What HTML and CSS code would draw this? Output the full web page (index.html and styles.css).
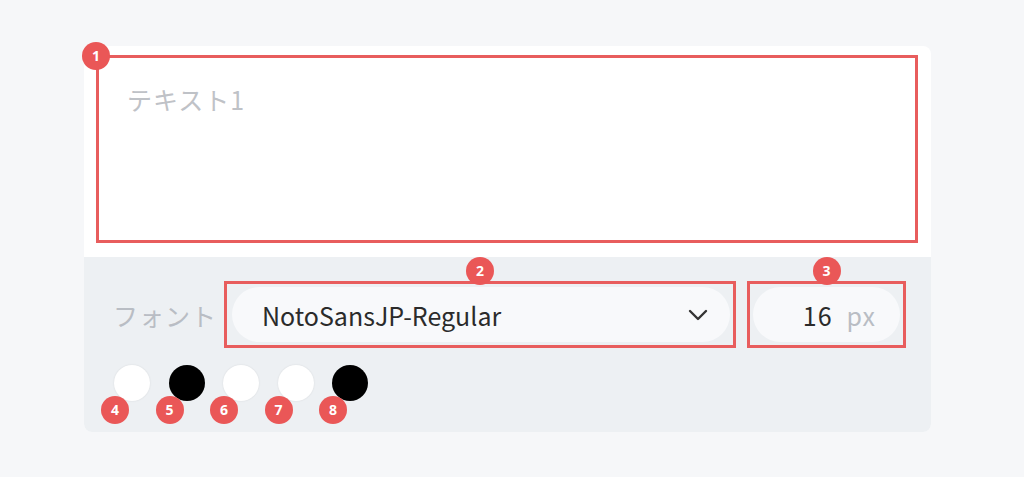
FILE: index.html
```html
<!DOCTYPE html>
<html lang="ja">
<head>
<meta charset="utf-8">
<title>Text settings</title>
<link rel="stylesheet" href="styles.css">
</head>
<body>
<div class="card">
  <div class="editor">
    <div class="mark mark-text">
      <span class="badge badge-corner">1</span>
      <div class="text-input">テキスト1</div>
    </div>
  </div>
  <div class="toolbar">
    <div class="font-row">
      <span class="label">フォント</span>
      <div class="mark mark-select">
        <span class="badge badge-top">2</span>
        <div class="select">
          <span class="select-value">NotoSansJP-Regular</span>
          <svg class="chevron" width="20" height="12" viewBox="0 0 20 12"><path d="M2 2 L10 10 L18 2" fill="none" stroke="#333" stroke-width="2.4" stroke-linecap="round" stroke-linejoin="round"/></svg>
        </div>
      </div>
      <div class="mark mark-size">
        <span class="badge badge-top">3</span>
        <div class="size">
          <span class="num">16</span>
          <span class="unit">px</span>
        </div>
      </div>
    </div>
    <div class="colors">
      <div class="swatch swatch-white"><span class="badge badge-swatch">4</span></div>
      <div class="swatch swatch-black"><span class="badge badge-swatch">5</span></div>
      <div class="swatch swatch-white"><span class="badge badge-swatch">6</span></div>
      <div class="swatch swatch-white"><span class="badge badge-swatch">7</span></div>
      <div class="swatch swatch-black"><span class="badge badge-swatch">8</span></div>
    </div>
  </div>
</div>
</body>
</html>
```
FILE: styles.css
```css
* { box-sizing: border-box; }
html, body {
  margin: 0;
  padding: 0;
  background: #f6f7f9;
  font-family: "Noto Sans CJK JP", "Noto Sans", sans-serif;
}
.card {
  margin: 46px 0 0 84px;
  width: 847px;
  border-radius: 8px;
  background: #ffffff;
}
.editor {
  height: 211px;
  padding: 9px 13px 14px 12px;
}
.mark {
  position: relative;
  border: 3px solid #e85d5d;
}
.mark-text {
  height: 188px;
  padding: 23px 0 0 28px;
}
.text-input {
  font-size: 25px;
  line-height: 36px;
  color: #bfc2c7;
  letter-spacing: 1px;
}
.badge {
  position: absolute;
  width: 28px;
  height: 28px;
  border-radius: 50%;
  background: #ea5757;
  color: #ffffff;
  font-family: "Noto Sans", sans-serif;
  font-weight: 700;
  font-size: 14px;
  line-height: 28px;
  text-align: center;
  z-index: 2;
}
.badge-corner {
  left: -17px;
  top: -16px;
}
.badge-top {
  left: 50%;
  top: -27px;
  transform: translateX(-50%);
}
.toolbar {
  height: 175px;
  background: #edf0f3;
  border-radius: 0 0 8px 8px;
  padding: 24px 0 0 29px;
}
.font-row {
  display: flex;
  align-items: center;
}
.label {
  flex: none;
  width: 111px;
  font-size: 25px;
  color: #b9bdc4;
  letter-spacing: 1px;
  white-space: nowrap;
}
.mark-select {
  flex: none;
  width: 512px;
  height: 67px;
  padding: 3px 3px 3px 5px;
  margin-right: 11px;
}
.select {
  height: 100%;
  background: #f8f9fb;
  border-radius: 28px;
  display: flex;
  align-items: center;
  justify-content: space-between;
  padding: 0 22px 0 30px;
}
.select-value {
  font-size: 25px;
  color: #2b2b2b;
}
.chevron { display: block; }
.mark-size {
  flex: none;
  width: 159px;
  height: 67px;
  padding: 3px;
}
.size {
  height: 100%;
  background: #f8f9fb;
  border-radius: 28px;
  display: flex;
  align-items: center;
  justify-content: flex-end;
  gap: 14px;
  padding-right: 24px;
  font-size: 25px;
}
.num { color: #2b2b2b; letter-spacing: 1px; }
.unit { color: #b9bdc4; letter-spacing: 1px; }
.colors {
  display: flex;
  gap: 18.5px;
  margin: 17px 0 0 1px;
}
.swatch {
  position: relative;
  width: 36px;
  height: 36px;
  border-radius: 50%;
}
.swatch-white {
  background: #ffffff;
  box-shadow: 0 0 2px rgba(0,0,0,0.10);
}
.swatch-black { background: #000000; }
.badge-swatch {
  left: -13px;
  top: 31px;
}
```
